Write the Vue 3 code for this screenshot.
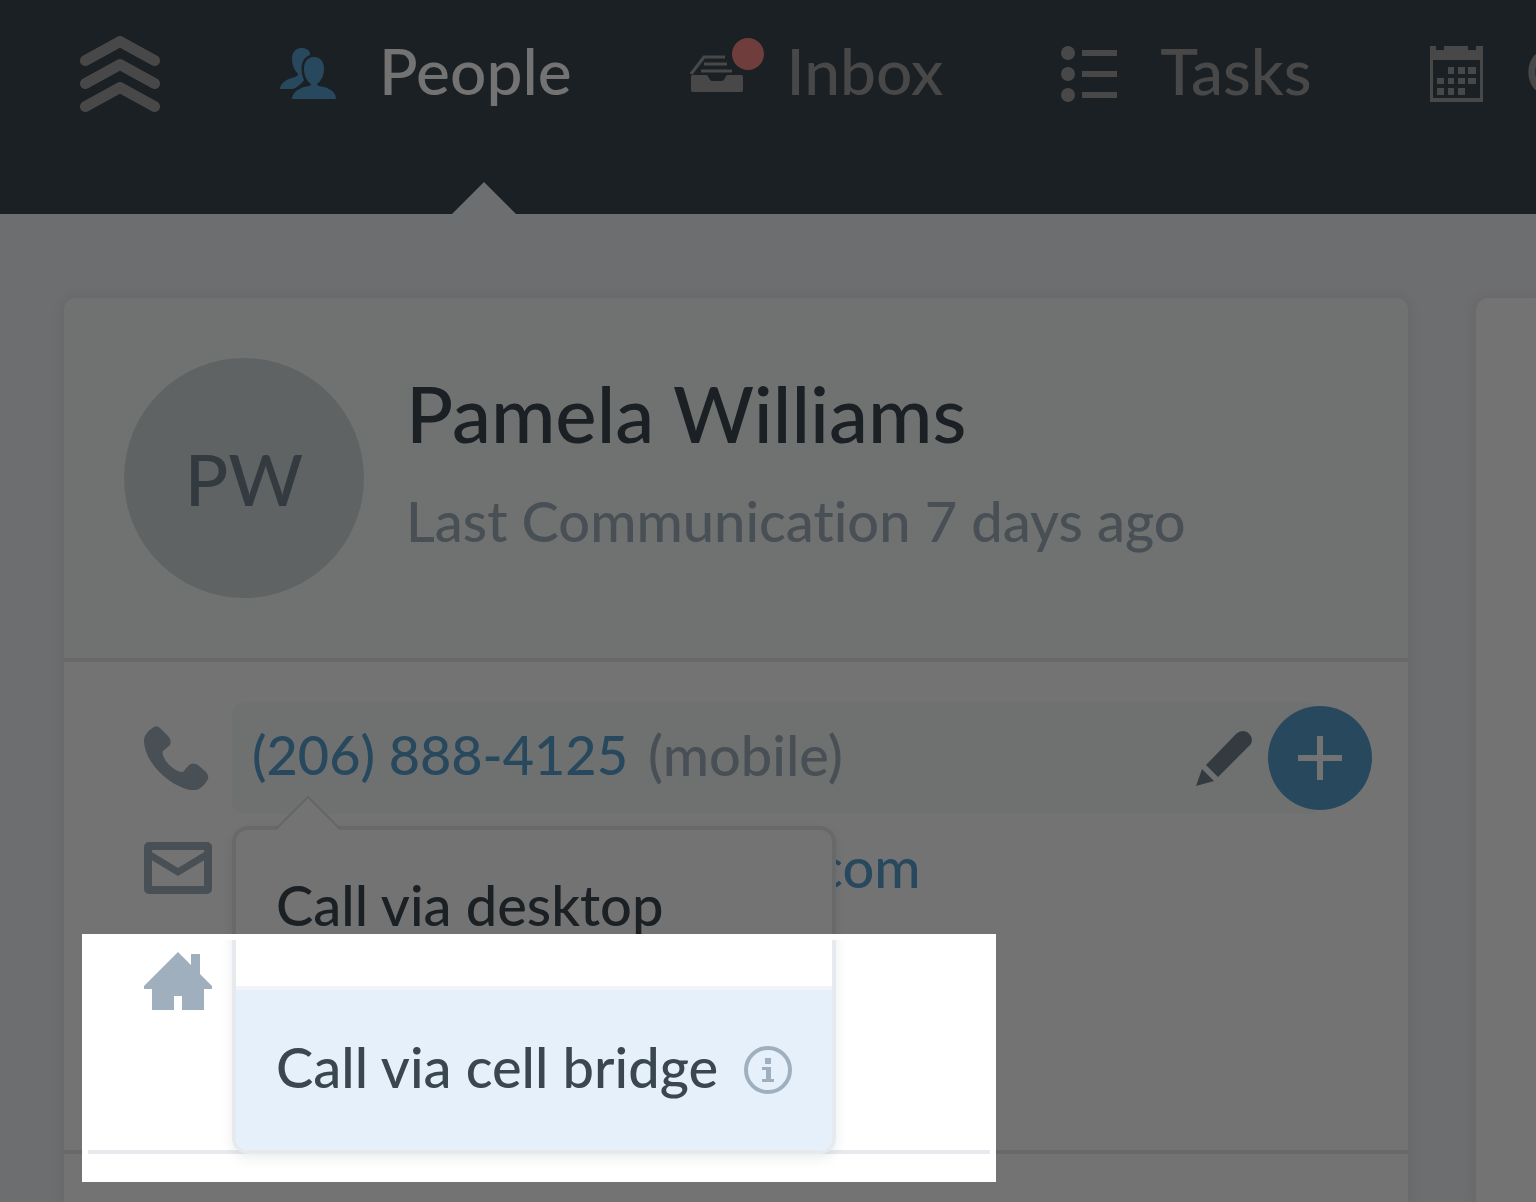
<template>
  <div class="page">
    <header class="topbar">
      <a href="#" class="logo" aria-label="Home">
        <svg width="80" height="76" viewBox="0 0 80 76" fill="none" stroke="#a0a0a0" stroke-width="11" stroke-linecap="round" stroke-linejoin="round">
          <path d="M5.500 24.500L40 5.500l34.500 19M5.500 47.500L40 28.500l34.500 19M5.500 70.500L40 51.500l34.500 19" />
        </svg>
      </a>
      <nav class="nav">
        <a v-for="item in menu" :key="item.id" href="#" class="nav-item" :class="{ active: item.id === selected }" @click.prevent="selected = item.id">
          <span class="nav-icon">
            <svg v-if="item.id === 'people'" width="56" height="52" viewBox="0 0 56 52">
              <path fill="#5a9fd0" d="M12 11C12 4 16 0 21 0c5 0 8 2 9 5v17l-5 9c-3 4-7 8-12 10H0c0-4 4-8 9-10 5-2 9-2 9-5-4-4-6-9-6-15z" />
              <path fill="#5a9fd0" stroke="#3c4750" stroke-width="5" paint-order="stroke" d="M24 21c0-8 4-12 10-12s10 4 10 12c0 7-3 12-7 15 0 2 3 2 7 3 7 2 12 6 12 12H12c0-6 6-10 12-12 4-1 7-1 7-3-4-3-7-8-7-15z" />
            </svg>
            <svg v-else-if="item.id === 'inbox'" width="54" height="38" viewBox="0 0 54 38" fill="#a0a0a0">
              <path d="M1 22v13q0 2 2 2h48q2 0 2-2V22q0-2-2-2H38c-3 0-3 6-6 6H22c-3 0-3-6-6-6H3q-2 0-2 2z" />
              <path d="M1 19L14 2h21M14 9h23M11 16h31" fill="none" stroke="#a0a0a0" stroke-width="3" />
            </svg>
            <svg v-else-if="item.id === 'tasks'" width="56" height="56" viewBox="0 0 56 56" fill="#a0a0a0">
              <circle cx="7" cy="7" r="7" /><circle cx="7" cy="28" r="7" /><circle cx="7" cy="49" r="7" />
              <path d="M21 4h35v6H21zM21 25h35v6H21zM21 46h35v6H21z" />
            </svg>
            <svg v-else width="53" height="56" viewBox="0 0 53 56" fill="#a0a0a0">
              <path fill-rule="evenodd" d="M0 0h6v4h8V0h24v4h8V0h7v56H0zM3 14v38h47V14z" />
              <path d="M18 21h6v7h-6zM28 21h7v7h-7zM38 21h8v7h-8zM7 32h7v6H7zM18 32h6v6h-6zM28 32h7v6h-7zM38 32h8v6h-8zM7 42h7v7H7zM18 42h6v7h-6zM28 42h7v7h-7z" />
            </svg>
            <i v-if="item.unread" class="dot"></i>
          </span>
          <span class="label">{{ item.label }}</span>
        </a>
      </nav>
    </header>

    <main class="content">
      <section class="card">
        <div class="profile">
          <div class="avatar">PW</div>
          <div class="who">
            <h1>Pamela Williams</h1>
            <p>Last Communication 7 days ago</p>
          </div>
        </div>

        <div class="details">
          <div class="row">
            <svg class="row-icon" width="68" height="64" viewBox="0 0 68 64" fill="#a0afbd">
              <path d="M10 1q3-2 6 1l8 8q4 4 2 9l-7 6c-3 7 12 22 20 21l6-7q4-3 9 0l8 7q3 3 2 7-3 6-9 10-4 2-9 1C23 59 0 35 0 14 0 9 5 4 10 1z" />
            </svg>
            <div class="phone">
              <a href="tel:2068884125" class="number label">(206) 888-4125</a>
              <span class="kind label">(mobile)</span>
              <button type="button" class="edit" aria-label="Edit">
                <svg width="56" height="56" viewBox="0 0 56 56" fill="#74838f">
                  <path d="M10 35L40 4q5-5 11-2 7 5 4 12L22 47zM6 39L18 51 0 56z" />
                </svg>
              </button>
            </div>
            <button type="button" class="add" aria-label="Add phone">
              <svg width="44" height="44" viewBox="0 0 44 44" stroke="#fff" stroke-width="6"><path d="M22 0v44M0 22h44" /></svg>
            </button>

            <div class="menu">
              <svg class="caret" width="68" height="36" viewBox="0 0 68 36">
                <path d="M1 36L34 3l33 33" fill="#fff" stroke="#dde1e5" stroke-width="2" />
              </svg>
              <button type="button"><span class="label">Call via desktop</span></button>
              <button type="button" class="chosen">
                <span class="label">Call via cell bridge</span>
                <svg width="48" height="48" viewBox="0 0 48 48" fill="#a0afbd">
                  <circle cx="24" cy="24" r="22" fill="none" stroke="#a0afbd" stroke-width="4" />
                  <path d="M21 12h6v6h-6zM18 21h9v12h3v3H18v-3h4v-9h-4z" />
                </svg>
              </button>
            </div>
          </div>

          <div class="row">
            <svg class="row-icon" width="68" height="56" viewBox="0 0 68 56" fill="none" stroke="#a0afbd">
              <rect x="4" y="4" width="60" height="44" rx="1" stroke-width="8" />
              <path d="M6 13l28 17 28-17" stroke-width="7" />
            </svg>
            <a href="#" class="email label">pamelawilliams@gmail.com</a>
          </div>

          <div class="row">
            <svg class="row-icon" width="68" height="60" viewBox="0 0 68 60" fill="#a0afbd">
              <path d="M34 0l13 13V2h9v20l12 12v3h-8v21H38V44h-8v14H8V37H0v-3z" />
            </svg>
          </div>
        </div>
      </section>

      <section class="card side"></section>
    </main>

    <div class="spotlight"></div>
  </div>
</template>

<script setup>
import { ref } from 'vue';

const selected = ref('people');

const menu = [
  { id: 'people', label: 'People' },
  { id: 'inbox', label: 'Inbox', unread: true },
  { id: 'tasks', label: 'Tasks' },
  { id: 'calendar', label: 'Calendar' }
];
</script>

<style>
body {
  margin: 0;
  background: #f2f3f6;
}
</style>

<style scoped>
.page {
  position: relative;
  display: flex;
  flex-direction: column;
  min-height: 100vh;
  overflow: hidden;
  background: #f2f3f6;
  color: #3a474f;
  font-family: Lato, "Open Sans", sans-serif;
  font-size: 56px;
  font-weight: 500;
  font-variant-ligatures: none;
  line-height: 64px;
}
a {
  color: #5a9fd0;
  text-decoration: none;
}
button {
  border: none;
  padding: 0;
  background: none;
  color: inherit;
  font: inherit;
  cursor: pointer;
}
svg {
  display: block;
  flex-shrink: 0;
}
.label {
  padding-bottom: 6px;
}

/* Top bar */
.topbar {
  display: flex;
  height: 214px;
  padding-left: 80px;
  background: #3c4750;
}
.logo {
  padding-top: 36px;
}
.nav {
  display: flex;
  gap: 118px;
  margin-left: 120px;
}
.nav-item {
  position: relative;
  display: flex;
  align-items: center;
  gap: 43px;
  height: 148px;
  padding-bottom: 66px;
  color: #a0a0a0;
  font-size: 64px;
  white-space: nowrap;
}
.nav-item.active {
  color: #fff;
}
.nav-item.active::after {
  content: '';
  position: absolute;
  bottom: 0;
  left: 59%;
  border: 32px solid transparent;
  border-top: none;
  border-bottom-color: #f2f3f6;
}
.nav-icon {
  position: relative;
}
.dot {
  position: absolute;
  top: -17px;
  right: -20px;
  width: 32px;
  height: 32px;
  border-radius: 50%;
  background: #f58a85;
}

/* Cards */
.content {
  display: flex;
  flex: 1;
  gap: 68px;
  padding: 84px 0 0 64px;
}
.card {
  flex: 1 0 auto;
  border-radius: 12px 12px 0 0;
  background: #fff;
  box-shadow: 0 0 12px 2px rgba(60, 70, 80, 0.08);
}
.side {
  flex: 0 0 60px;
  border-radius: 12px 0 0 0;
}
.profile {
  display: flex;
  align-items: center;
  gap: 42px;
  padding: 60px;
  border-bottom: 4px solid #e6e9ed;
  border-radius: 12px 12px 0 0;
  background: #f9fbfa;
}
.avatar {
  width: 240px;
  border-radius: 50%;
  background: #d6dcde;
  color: #74838f;
  font-size: 72px;
  line-height: 240px;
  text-align: center;
}
.who {
  padding-bottom: 34px;
}
h1 {
  margin: 0 0 32px;
  font-size: 78px;
  font-weight: 500;
  line-height: 88px;
}
p {
  margin: 0;
  color: #a0afbd;
}
.details {
  padding: 40px 36px 112px 80px;
  border-bottom: 4px solid #e6e9ed;
}
.row {
  position: relative;
  display: flex;
  align-items: center;
  height: 112px;
}
.row-icon {
  margin-right: 20px;
}
.phone {
  display: flex;
  flex: 1;
  align-items: center;
  gap: 20px;
  height: 112px;
  margin-right: -52px;
  padding: 0 68px 0 20px;
  border-radius: 12px;
  background: #f6f9f8;
}
.number {
  font-size: 54px;
}
.kind {
  color: #a0afbd;
}
.edit {
  margin-left: auto;
}
.add {
  position: relative;
  display: flex;
  align-items: center;
  justify-content: center;
  width: 104px;
  height: 104px;
  border-radius: 50%;
  background: #5a9fd0;
}
.email {
  margin-left: 20px;
}

/* Call menu */
.menu {
  position: absolute;
  top: 124px;
  left: 88px;
  z-index: 1;
  box-sizing: border-box;
  min-width: 604px;
  border: 4px solid #e6e9ed;
  border-radius: 16px;
  background: #fff;
  box-shadow: 0 4px 12px rgba(60, 70, 80, 0.1);
}
.menu button {
  display: flex;
  align-items: center;
  justify-content: space-between;
  gap: 16px;
  width: 100%;
  height: 156px;
  padding: 0 40px;
  text-align: left;
  white-space: nowrap;
}
.menu .chosen {
  height: 164px;
  border-top: 4px solid #f1f3f8;
  border-radius: 0 0 12px 12px;
  background: #e5f0fa;
}
.caret {
  position: absolute;
  top: -36px;
  left: 38px;
}

/* Everything outside of this frame is dimmed */
.spotlight {
  position: absolute;
  top: 934px;
  left: 82px;
  z-index: 2;
  box-sizing: border-box;
  width: 914px;
  height: 248px;
  border: 6px solid #fff;
  box-shadow: 0 0 0 2000px rgba(0, 0, 0, 0.55);
  pointer-events: none;
}
</style>
